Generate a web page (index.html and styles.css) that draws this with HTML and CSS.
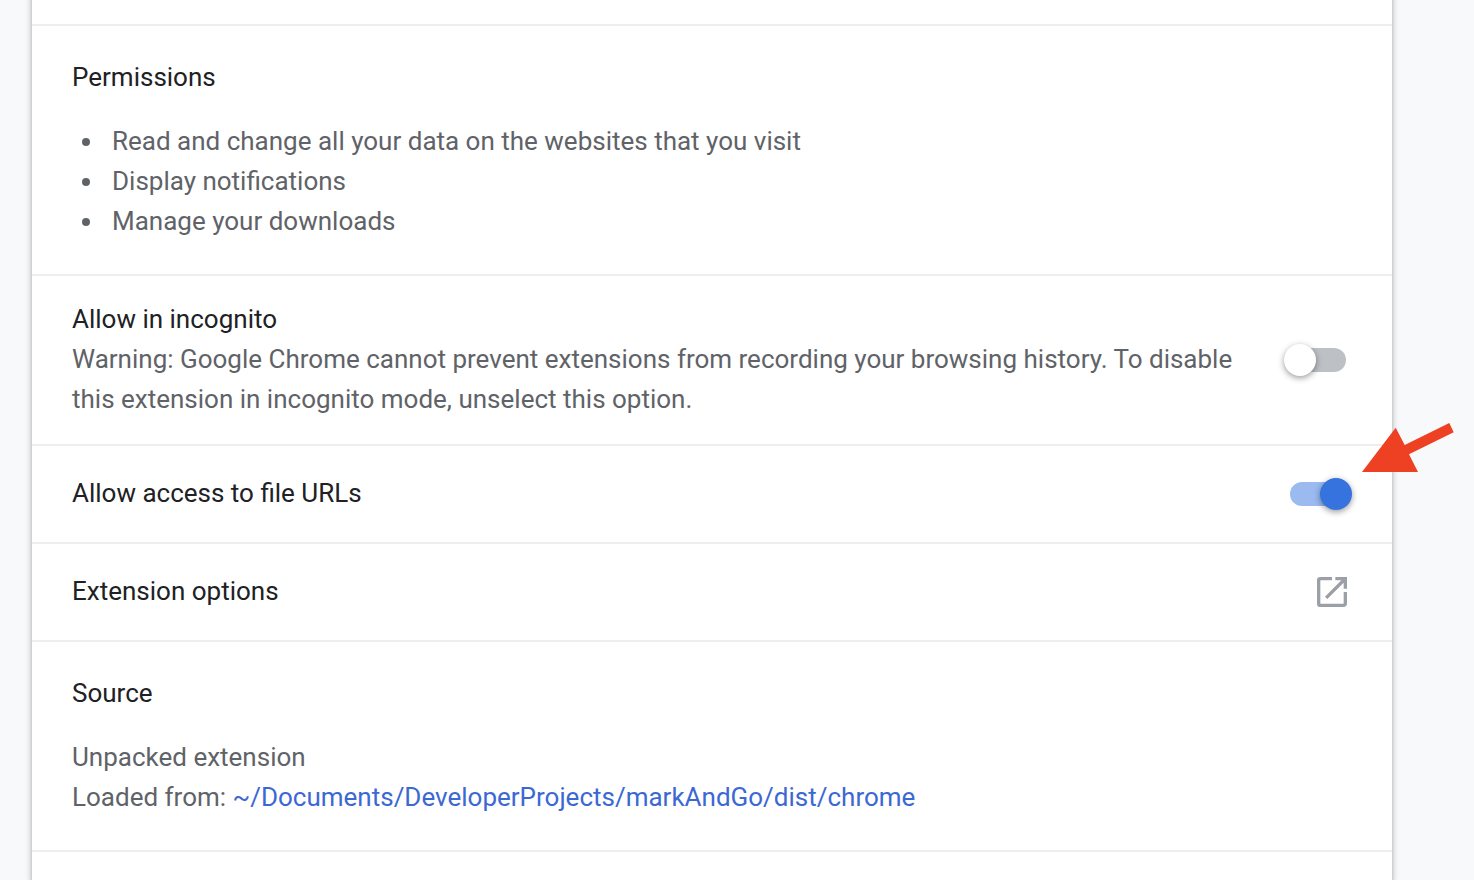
FILE: index.html
```html
<!DOCTYPE html>
<html lang="en">
<head>
<meta charset="utf-8">
<title>Extension details</title>
<link rel="stylesheet" href="styles.css">
</head>
<body>
<main class="card">
  <div class="section section-top"></div>
  <section class="section block">
    <h2 class="title">Permissions</h2>
    <ul class="permissions">
      <li>Read and change all your data on the websites that you visit</li>
      <li>Display notifications</li>
      <li>Manage your downloads</li>
    </ul>
  </section>
  <section class="section row">
    <div class="label">
      <label class="title" for="incognito">Allow in incognito</label>
      <p class="text">Warning: Google Chrome cannot prevent extensions from recording your browsing history. To disable this extension in incognito mode, unselect this option.</p>
    </div>
    <input class="toggle" id="incognito" type="checkbox" role="switch">
  </section>
  <section class="section row">
    <label class="label title" for="file-urls">Allow access to file URLs</label>
    <input class="toggle" id="file-urls" type="checkbox" role="switch" checked>
    <svg class="arrow" viewBox="0 0 94 52" aria-hidden="true">
      <path d="M2 50 35.700 5.700 44.700 23 89.300 1 93.700 10.300 49 32.300 58 50Z"/>
    </svg>
  </section>
  <section class="section row">
    <span class="label title">Extension options</span>
    <button class="open" type="button" aria-label="Extension options">
      <svg class="open-icon" viewBox="0 0 24 24" aria-hidden="true"><path d="M19 19H5V5h7V3H5a2 2 0 0 0-2 2v14a2 2 0 0 0 2 2h14c1.100 0 2-.9 2-2v-7h-2v7zM14 3v2h3.590l-9.830 9.830 1.410 1.410L19 6.410V10h2V3h-7z"/></svg>
    </button>
  </section>
  <section class="section block">
    <h2 class="title">Source</h2>
    <p class="text">Unpacked extension</p>
    <p class="text">Loaded from: <a class="path" href="#">~/Documents/DeveloperProjects/markAndGo/dist/chrome</a></p>
  </section>
</main>
</body>
</html>
```
FILE: styles.css
```css
* { box-sizing: border-box; }
body {
  margin: 0;
  min-height: 100vh;
  display: flex;
  padding: 0 82px 0 32px;
  background: #f8f9fa;
  color: #202124;
  font: 26px/40px Roboto, sans-serif;
  overflow-x: hidden;
}
.card {
  flex: 1;
  margin-top: -12px;
  background: #fff;
  box-shadow: 0 2px 4px rgba(60, 64, 67, .3), 0 2px 6px 2px rgba(60, 64, 67, .15);
}
.section { border-bottom: 2px solid #eee; }
.section-top { height: 38px; }
.block { padding: 31px 40px 33px; }
.title { margin: 0; font-size: 26px; font-weight: 400; }
.block .title { margin-bottom: 24px; }
.text { margin: 0; color: #5f6368; }
.permissions {
  margin: 0;
  padding: 0;
  list-style: none;
  color: #5f6368;
}
.permissions li {
  display: flex;
  align-items: center;
}
.permissions li::before {
  content: "";
  flex: none;
  width: 8px;
  height: 8px;
  margin: 2px 22px 0 10px;
  border-radius: 50%;
  background: #5f6368;
}
.row {
  position: relative;
  display: flex;
  align-items: center;
  justify-content: space-between;
  min-height: 98px;
  padding: 23px 40px;
}
.label { flex: 1; margin-right: 40px; padding-bottom: 2px; }
.toggle {
  appearance: none;
  flex: none;
  display: flex;
  align-items: center;
  width: 56px;
  height: 24px;
  margin: 0 6px 0 0;
  border-radius: 12px;
  background: #bdc1c6;
}
.toggle::before {
  content: "";
  width: 32px;
  height: 32px;
  margin-left: -6px;
  flex: none;
  border-radius: 50%;
  background: #fff;
  box-shadow: 0 2px 6px rgba(0, 0, 0, .4);
}
.toggle:checked { background: #9abaf0; }
.toggle:checked::before { margin-left: 30px; background: #3673df; }
.arrow {
  position: absolute;
  right: -62px;
  top: -24px;
  width: 94px;
  height: 52px;
  fill: #ee4023;
}
.open {
  display: flex;
  padding: 0;
  border: 0;
  background: none;
}
.open-icon { width: 40px; height: 40px; fill: #9aa0a6; }
.path { color: #3c68d4; text-decoration: none; }
```
